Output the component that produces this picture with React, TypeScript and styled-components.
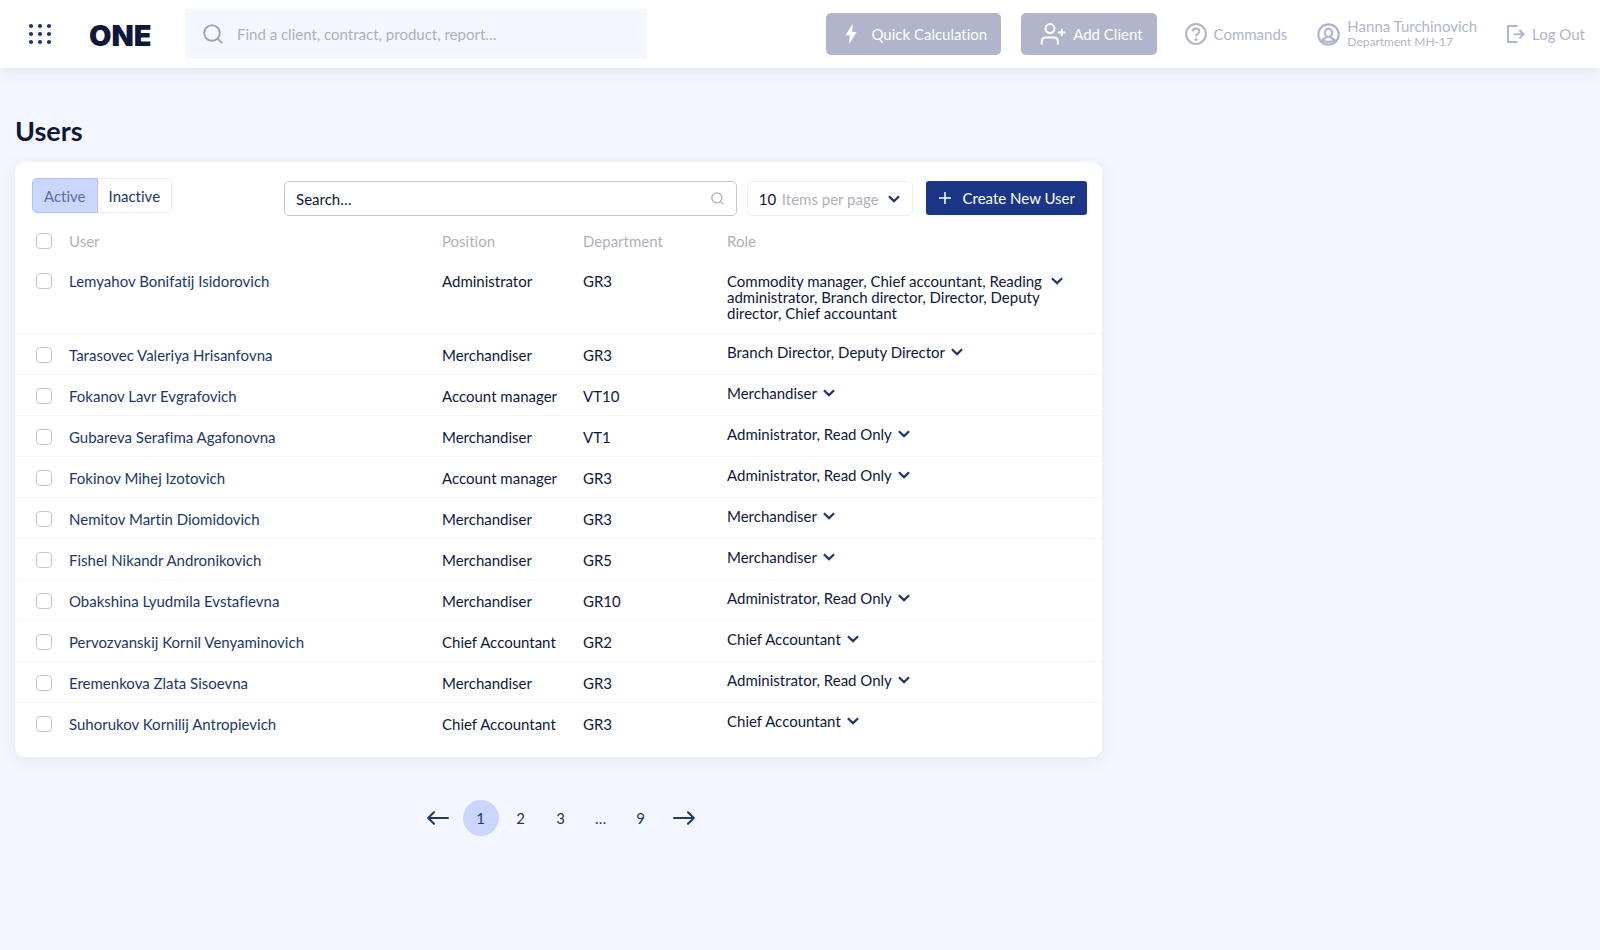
import React from "react";
import styled, { createGlobalStyle, css } from "styled-components";

const color = {
  page: "#f4f7ff",
  field: "#f4f8fe",
  white: "#ffffff",
  ink: "#0f1838",
  navy: "#233768",
  brand: "#1b3587",
  muted: "#aeb1bb",
  soft: "#b0b5cb",
  tint: "#cad6fe",
  line: "#f3f5f9",
};

const GlobalStyle = createGlobalStyle`
  *, *::before, *::after { box-sizing: border-box; }
  body {
    margin: 0;
    background: ${color.page};
    color: ${color.ink};
    font: 400 15px/16px Lato, "Open Sans", sans-serif;
    font-variant-ligatures: no-common-ligatures;
  }
  button, input, select { font: inherit; color: inherit; font-variant-ligatures: inherit; }
  button { cursor: pointer; }
  a { color: inherit; text-decoration: none; }
`;

/* ---------- icons ---------- */

const Chevron = () => (
  <svg width="12" height="8" viewBox="0 0 12 8" fill="none" stroke={color.navy} strokeWidth="2.2" aria-hidden="true">
    <path d="M0.9 1.2 6 6.1 11.1 1.2" />
  </svg>
);

const SearchIcon = ({ size }: { size: number }) => (
  <svg width={size} height={size} viewBox="0 0 20 20" fill="none" stroke="currentColor" strokeWidth="2" strokeLinecap="round" aria-hidden="true">
    <circle cx="9" cy="9" r="7.8" />
    <path d="m14.8 14.8 3.8 3.8" />
  </svg>
);

const GridIcon = () => (
  <svg width="24" height="22" viewBox="0 0 24 22" fill={color.navy} aria-hidden="true">
    {[3, 11, 19].map((y) => [3, 12, 21].map((x) => <circle key={`${x}-${y}`} cx={x} cy={y} r="2.1" />))}
  </svg>
);

const BoltIcon = () => (
  <svg width="12" height="20" viewBox="0 0 12 20" fill="currentColor" aria-hidden="true">
    <path d="M7.6 0 0.4 11.2H4.6L4.2 20 11.6 8H7.2Z" />
  </svg>
);

const AddUserIcon = () => (
  <svg width="26" height="22" viewBox="0 0 26 22" fill="none" stroke="currentColor" strokeWidth="2" strokeLinecap="round" aria-hidden="true">
    <circle cx="10" cy="5.6" r="4.5" />
    <path d="M1.8 20.8V18.6c0-2.4 1.6-4 4-4h8c2.4 0 4 1.6 4 4v2.2" />
    <path d="M21.8 6.4v6.2M18.7 9.5h6.2" strokeWidth="1.8" />
  </svg>
);

const HelpIcon = () => (
  <svg width="22" height="22" viewBox="0 0 22 22" fill="none" stroke="currentColor" strokeWidth="2" aria-hidden="true">
    <circle cx="11" cy="11" r="9.9" />
    <path d="M7.6 8.6c0-2 1.4-3.2 3.4-3.2s3.4 1.2 3.4 3c0 2.2-3.4 2.3-3.4 5" />
    <circle cx="11" cy="16.4" r="1.5" fill="currentColor" stroke="none" />
  </svg>
);

const ProfileIcon = () => (
  <svg width="23" height="23" viewBox="0 0 23 23" fill="none" stroke="currentColor" strokeWidth="2.2" aria-hidden="true">
    <circle cx="11.5" cy="11.5" r="10.2" />
    <ellipse cx="11.5" cy="9.8" rx="3.6" ry="4.2" />
    <path d="M4.8 17.8c1.2-1.8 3-2.2 4.6-3.4M18.2 17.8c-1.2-1.8-3-2.2-4.6-3.4M5 17.8c4 1.3 9 1.3 13 0" />
  </svg>
);

const LogOutIcon = () => (
  <svg width="18" height="18" viewBox="0 0 18 18" fill="none" stroke="currentColor" strokeWidth="2" aria-hidden="true">
    <path d="M10.4 1H1v16h9.4M6.8 9.2H16M12.4 5l4.2 4.2-4.2 4.2" />
  </svg>
);

const PlusIcon = () => (
  <svg width="12" height="12" viewBox="0 0 12 12" stroke="currentColor" strokeWidth="1.5" aria-hidden="true">
    <path d="M6 0v12M0 6h12" />
  </svg>
);

const Arrow = ({ back }: { back?: boolean }) => (
  <svg width="22" height="14" viewBox="0 0 22 14" fill="none" stroke={color.navy} strokeWidth="2" strokeLinecap="round" strokeLinejoin="round" aria-hidden="true">
    {back ? <path d="M21 7H1.4M7 1.2 1.2 7 7 12.8" /> : <path d="M1 7h19.6M15 1.2 20.8 7 15 12.8" />}
  </svg>
);

/* ---------- header ---------- */

const Header = styled.header`
  display: flex;
  align-items: center;
  height: 68px;
  padding: 0 15px 0 28px;
  background: ${color.white};
  box-shadow: 0 2px 16px rgba(31, 52, 104, 0.1);
`;

const BareButton = styled.button`
  display: flex;
  align-items: center;
  justify-content: center;
  padding: 0;
  border: 0;
  background: none;
`;

const Logo = styled.a`
  width: 96px;
  margin-left: 37px;
  padding-top: 4px;
  color: ${color.ink};
  font: 900 29px/32px Inter, sans-serif;
`;

const GlobalSearch = styled.label`
  display: flex;
  flex: 0 1 462px;
  align-items: center;
  gap: 14px;
  height: 50px;
  padding: 0 18px;
  border-radius: 4px;
  background: ${color.field};
  color: #a3a7b4;
`;

const BareInput = styled.input<{ $dark?: boolean }>`
  flex: 1;
  min-width: 0;
  padding: 0;
  border: 0;
  outline: 0;
  background: none;
  color: ${color.ink};
  &::placeholder {
    color: ${(p) => (p.$dark ? color.ink : color.muted)};
    opacity: 1;
  }
`;

const HeaderActions = styled.div`
  display: flex;
  gap: 20px;
  margin-left: auto;
`;

const ActionButton = styled.button<{ $gap: number }>`
  display: flex;
  align-items: center;
  gap: ${(p) => p.$gap}px;
  height: 42px;
  padding: 0 14px 0 19px;
  border: 0;
  border-radius: 5px;
  background: ${color.soft};
  color: ${color.white};
  white-space: nowrap;
`;

const HeaderLinks = styled.nav`
  display: flex;
  align-items: center;
  gap: 30px;
  margin-left: 28px;
  color: ${color.soft};
  white-space: nowrap;
`;

const HeaderLink = styled.a`
  display: flex;
  align-items: center;
  gap: 7px;
`;

const Person = styled.span`
  display: grid;
`;

const Small = styled.small`
  font-size: 12px;
`;

/* ---------- users panel ---------- */

const Main = styled.main`
  max-width: 1117px;
  padding: 47px 15px 0;
`;

const Title = styled.h1`
  margin: 0 0 15px;
  font-size: 27px;
  font-weight: 700;
  line-height: 32px;
`;

const Panel = styled.section`
  padding-bottom: 13px;
  border-radius: 10px;
  background: ${color.white};
  box-shadow: 0 3px 18px rgba(31, 52, 104, 0.08);
`;

const Toolbar = styled.div`
  display: flex;
  padding: 16px 15px 4px 17px;
`;

const Tabs = styled.div`
  display: flex;
  align-self: flex-start;
  margin-right: 112px;
`;

const Tab = styled.button<{ $active?: boolean }>`
  height: 35px;
  padding: 0 11px;
  border: 1px solid #e9ebf0;
  border-left: 0;
  border-radius: 0 5px 5px 0;
  background: ${color.white};
  color: ${color.navy};
  ${(p) =>
    p.$active &&
    css`
      border: 1px solid #b4c3ea;
      border-radius: 5px 0 0 5px;
      background: ${color.tint};
      color: #5f6d9e;
    `}
`;

const SearchField = styled.label`
  display: flex;
  flex: 1;
  align-items: center;
  height: 35px;
  margin-top: 3px;
  padding: 0 12px 0 11px;
  border: 1px solid #c4c7ce;
  border-radius: 5px;
  color: ${color.muted};
`;

const PageSize = styled.label`
  display: flex;
  align-items: center;
  height: 35px;
  margin: 3px 13px 0 10px;
  padding: 0 12px 0 11px;
  border: 1px solid #eceef2;
  border-radius: 5px;
  color: ${color.muted};
  white-space: nowrap;
  svg { margin-left: 9px; }
`;

const PageSizeSelect = styled.select`
  appearance: none;
  width: 23px;
  padding: 0;
  border: 0;
  background: none;
  color: ${color.ink};
`;

const CreateButton = styled.button`
  display: flex;
  align-items: center;
  gap: 12px;
  height: 34px;
  margin-top: 3px;
  padding: 0 12px 0 13px;
  border: 0;
  border-radius: 3px;
  background: ${color.brand};
  color: ${color.white};
  white-space: nowrap;
`;

const Table = styled.table`
  width: 100%;
  border-collapse: separate;
  border-spacing: 0;
  table-layout: fixed;
`;

const HeadCell = styled.th<{ $width?: number }>`
  width: ${(p) => (p.$width ? `${p.$width}px` : "auto")};
  padding: 13px 0 11px;
  color: ${color.muted};
  font-weight: 400;
  text-align: left;
  vertical-align: top;
  &:first-child { padding-left: 21px; }
`;

const Cell = styled.td`
  padding: 13px 0 11px;
  border-bottom: 1px solid ${color.line};
  vertical-align: top;
  &:first-child { padding-left: 21px; }
  tr:last-child > & { border-bottom-color: transparent; }
`;

const RoleCell = styled(Cell)<{ $expanded?: boolean }>`
  padding: ${(p) => (p.$expanded ? "13px 0 12px" : "10px 0 14px")};
`;

const Roles = styled.div`
  display: flex;
  align-items: flex-start;
  gap: 6px;
`;

const RoleText = styled.span`
  max-width: 318px;
`;

const RoleToggle = styled(BareButton)`
  height: 16px;
`;

const Check = styled.input`
  appearance: none;
  display: block;
  width: 16px;
  height: 16px;
  margin: 0;
  border: 1px solid #c2c5cd;
  border-radius: 4px;
  background: ${color.white};
  &:checked { background: ${color.brand}; }
`;

const UserLink = styled.a`
  color: ${color.navy};
`;

const Pagination = styled.nav`
  display: flex;
  align-items: center;
  justify-content: center;
  gap: 14px;
  margin-top: 43px;
  padding-left: 4px;
`;

const Pages = styled.div`
  display: flex;
  gap: 4px;
`;

const PageButton = styled.button<{ $current?: boolean }>`
  width: 36px;
  height: 36px;
  padding: 0;
  border: 0;
  border-radius: 50%;
  background: ${(p) => (p.$current ? color.tint : "transparent")};
  color: ${color.navy};
`;

type User = { name: string; position: string; department: string; roles: string; expanded?: boolean };

const users: User[] = [
  {
    name: "Lemyahov Bonifatij Isidorovich",
    position: "Administrator",
    department: "GR3",
    roles: "Commodity manager, Chief accountant, Reading administrator, Branch director, Director, Deputy director, Chief accountant",
    expanded: true,
  },
  { name: "Tarasovec Valeriya Hrisanfovna", position: "Merchandiser", department: "GR3", roles: "Branch Director, Deputy Director" },
  { name: "Fokanov Lavr Evgrafovich", position: "Account manager", department: "VT10", roles: "Merchandiser" },
  { name: "Gubareva Serafima Agafonovna", position: "Merchandiser", department: "VT1", roles: "Administrator, Read Only" },
  { name: "Fokinov Mihej Izotovich", position: "Account manager", department: "GR3", roles: "Administrator, Read Only" },
  { name: "Nemitov Martin Diomidovich", position: "Merchandiser", department: "GR3", roles: "Merchandiser" },
  { name: "Fishel Nikandr Andronikovich", position: "Merchandiser", department: "GR5", roles: "Merchandiser" },
  { name: "Obakshina Lyudmila Evstafievna", position: "Merchandiser", department: "GR10", roles: "Administrator, Read Only" },
  { name: "Pervozvanskij Kornil Venyaminovich", position: "Chief Accountant", department: "GR2", roles: "Chief Accountant" },
  { name: "Eremenkova Zlata Sisoevna", position: "Merchandiser", department: "GR3", roles: "Administrator, Read Only" },
  { name: "Suhorukov Kornilij Antropievich", position: "Chief Accountant", department: "GR3", roles: "Chief Accountant" },
];

export default function App() {
  return (
    <>
      <GlobalStyle />
      <Header>
        <BareButton aria-label="Menu">
          <GridIcon />
        </BareButton>
        <Logo href="#">ONE</Logo>
        <GlobalSearch>
          <SearchIcon size={20} />
          <BareInput type="text" aria-label="Global search" placeholder="Find a client, contract, product, report…" />
        </GlobalSearch>
        <HeaderActions>
          <ActionButton $gap={14}>
            <BoltIcon />
            Quick Calculation
          </ActionButton>
          <ActionButton $gap={7}>
            <AddUserIcon />
            Add Client
          </ActionButton>
        </HeaderActions>
        <HeaderLinks>
          <HeaderLink href="#">
            <HelpIcon />
            Commands
          </HeaderLink>
          <HeaderLink href="#">
            <ProfileIcon />
            <Person>
              Hanna Turchinovich
              <Small>Department MH-17</Small>
            </Person>
          </HeaderLink>
          <HeaderLink href="#">
            <LogOutIcon />
            Log Out
          </HeaderLink>
        </HeaderLinks>
      </Header>

      <Main>
        <Title>Users</Title>
        <Panel>
          <Toolbar>
            <Tabs>
              <Tab $active>Active</Tab>
              <Tab>Inactive</Tab>
            </Tabs>
            <SearchField>
              <BareInput $dark type="text" aria-label="Search users" placeholder="Search…" />
              <SearchIcon size={13} />
            </SearchField>
            <PageSize>
              <PageSizeSelect defaultValue="10">
                <option>10</option>
                <option>20</option>
                <option>50</option>
              </PageSizeSelect>
              Items per page
              <Chevron />
            </PageSize>
            <CreateButton>
              <PlusIcon />
              Create New User
            </CreateButton>
          </Toolbar>
          <Table>
            <thead>
              <tr>
                <HeadCell $width={54}>
                  <Check type="checkbox" aria-label="Select all users" />
                </HeadCell>
                <HeadCell $width={373}>User</HeadCell>
                <HeadCell $width={141}>Position</HeadCell>
                <HeadCell $width={144}>Department</HeadCell>
                <HeadCell>Role</HeadCell>
              </tr>
            </thead>
            <tbody>
              {users.map((user) => (
                <tr key={user.name}>
                  <Cell>
                    <Check type="checkbox" aria-label={`Select ${user.name}`} />
                  </Cell>
                  <Cell>
                    <UserLink href="#">{user.name}</UserLink>
                  </Cell>
                  <Cell>{user.position}</Cell>
                  <Cell>{user.department}</Cell>
                  <RoleCell $expanded={user.expanded}>
                    <Roles>
                      <RoleText>{user.roles}</RoleText>
                      <RoleToggle aria-label={`Roles of ${user.name}`}>
                        <Chevron />
                      </RoleToggle>
                    </Roles>
                  </RoleCell>
                </tr>
              ))}
            </tbody>
          </Table>
        </Panel>
        <Pagination aria-label="Pages">
          <BareButton aria-label="Previous page">
            <Arrow back />
          </BareButton>
          <Pages>
            {["1", "2", "3", "…", "9"].map((page) => (
              <PageButton key={page} $current={page === "1"}>
                {page}
              </PageButton>
            ))}
          </Pages>
          <BareButton aria-label="Next page">
            <Arrow />
          </BareButton>
        </Pagination>
      </Main>
    </>
  );
}
